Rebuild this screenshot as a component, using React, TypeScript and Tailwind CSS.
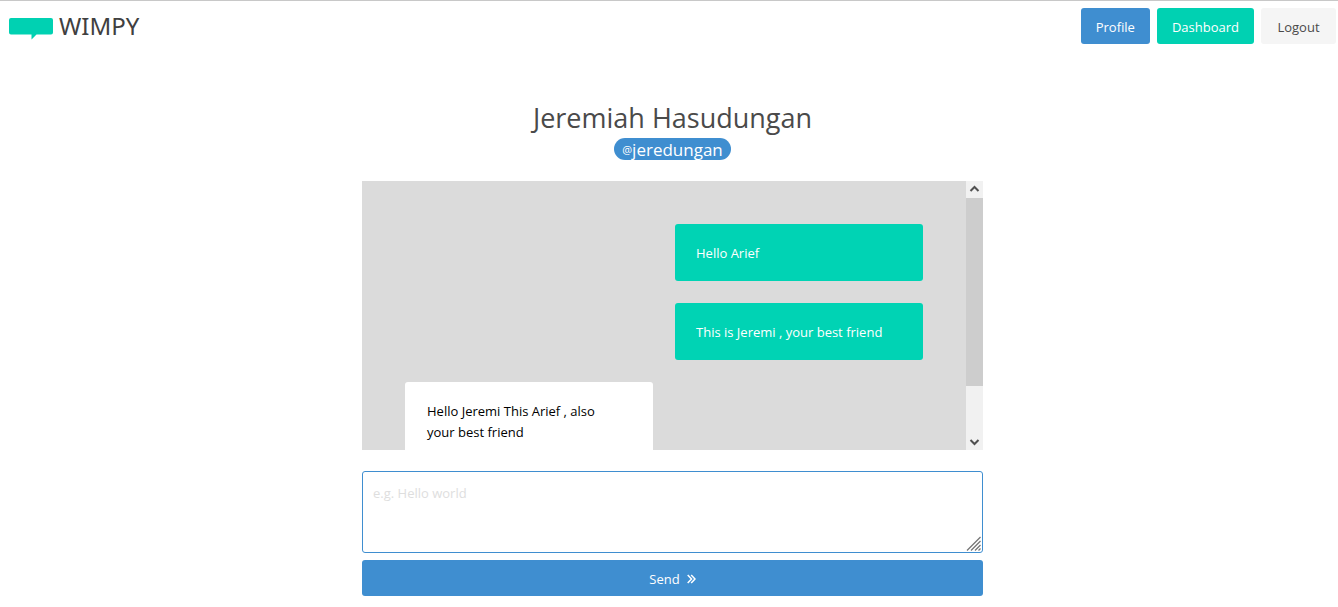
import { useState } from "react";

type Message = { id: number; text: string; mine: boolean };

const messages: Message[] = [
  { id: 1, text: "Hello Arief", mine: true },
  { id: 2, text: "This is Jeremi , your best friend", mine: true },
  { id: 3, text: "Hello Jeremi This Arief , also your best friend", mine: false },
];

function Logo() {
  return (
    <a href="#home" aria-label="Wimpy home" className="flex items-center gap-1.5 text-[#404040]">
      <svg width="44" height="22" viewBox="0 0 44 22" className="mt-1.5" aria-hidden="true">
        <path
          d="M2 0H42Q44 0 44 2V14.5Q44 16.500 42 16.500H27.500L22.500 21.500V16.500H2Q0 16.500 0 14.500V2Q0 0 2 0Z"
          fill="#00d1b2"
        />
      </svg>
      <span className="font-['Noto_Sans',sans-serif] text-[24px] leading-6">WIMPY</span>
    </a>
  );
}

function Header() {
  return (
    <header className="flex items-start justify-between border-t border-[#c8c8c8] pt-[7px] pr-0.5 pl-[9px]">
      <div className="pt-1">
        <Logo />
      </div>
      <nav className="flex gap-[7px]">
        <a href="#profile" className="flex h-9 items-center rounded-[3px] bg-[#3f8ed0] px-[15px] pt-0.5 text-white">
          Profile
        </a>
        <a href="#dashboard" className="flex h-9 items-center rounded-[3px] bg-[#00d1b2] px-[15px] pt-0.5 text-white">
          Dashboard
        </a>
        <a href="#logout" className="flex h-9 w-[75px] items-center justify-center rounded-[3px] bg-[#f5f5f5] pt-0.5 text-[#4a4a4a]">
          Logout
        </a>
      </nav>
    </header>
  );
}

function Bubble({ message }: { message: Message }) {
  return (
    <li
      className={
        message.mine
          ? "w-[248px] self-end rounded-[3px] bg-[#00d3b4] px-[21px] pt-[19px] pb-[17px] text-white"
          : "w-[248px] self-start rounded-[3px] bg-white pt-[19px] pr-9 pb-[17px] pl-[22px] text-black"
      }
    >
      {message.text}
    </li>
  );
}

function ScrollTrack() {
  return (
    <div className="flex w-[17px] shrink-0 flex-col bg-[#f1f1f1]" aria-hidden="true">
      <svg width="17" height="17" viewBox="0 0 17 17" fill="none" stroke="#505050" strokeWidth="2">
        <path d="M4.500 10L8.500 6L12.500 10" />
      </svg>
      <div className="flex-1">
        <div className="h-4/5 bg-[#cdcdcd]" />
      </div>
      <svg width="17" height="17" viewBox="0 0 17 17" fill="none" stroke="#505050" strokeWidth="2">
        <path d="M4.500 7L8.500 11L12.500 7" />
      </svg>
    </div>
  );
}

export default function App() {
  const [draft, setDraft] = useState("");
  return (
    <div className="bg-white font-['Open_Sans','Noto_Sans',sans-serif] text-[13px] leading-[21px]">
      <Header />
      <main className="pt-14 pb-[11px] pl-[7px]">
        <div className="mx-auto w-full max-w-[621px]">
          <div className="flex flex-col items-center">
            <h1 className="text-[27px] leading-9 text-[#4a4a4a]">Jeremiah Hasudungan</h1>
            <p className="mt-0.5 flex h-[22px] items-center rounded-full bg-[#3f8ed0] px-2 text-[17px] text-white">
              <span className="text-[11px]">@</span>jeredungan
            </p>
          </div>
          <section aria-label="Conversation" className="mt-[21px] flex h-[269px] bg-[#dbdbdb]">
            <ul className="flex min-w-0 flex-1 flex-col gap-[22px] overflow-y-auto px-[43px] pt-[43px] [scrollbar-width:none]">
              {messages.map((message) => (
                <Bubble key={message.id} message={message} />
              ))}
            </ul>
            <ScrollTrack />
          </section>
          <form className="mt-[21px] flex flex-col gap-[7px]" onSubmit={(event) => event.preventDefault()}>
            <div className="relative">
              <textarea
                aria-label="Message"
                placeholder="e.g. Hello world"
                value={draft}
                onChange={(event) => setDraft(event.target.value)}
                className="block h-[82px] w-full resize-none rounded-[3px] border border-[#3f8ed0] bg-white px-2.5 py-[11px] text-[#363636] outline-none placeholder:text-[#dedede]"
              />
              <svg
                width="15"
                height="15"
                viewBox="0 0 15 15"
                fill="none"
                stroke="#777777"
                strokeWidth="1.300"
                className="pointer-events-none absolute right-0.5 bottom-0.5"
                aria-hidden="true"
              >
                <path d="M1 14.500L14.500 1M5 14.500L14.500 5M9 14.500L14.500 9M12.500 14.500L14.500 12.500" />
              </svg>
            </div>
            <button
              type="submit"
              className="flex h-9 items-center justify-center gap-[7px] rounded-[3px] bg-[#3f8ed0] pt-0.5 text-white"
            >
              Send
              <svg
                width="9"
                height="10"
                viewBox="0 0 9 10"
                fill="none"
                stroke="currentColor"
                strokeWidth="1.500"
                aria-hidden="true"
              >
                <path d="M0.700 1L4.500 5L0.700 9M4.200 1L8 5L4.200 9" />
              </svg>
            </button>
          </form>
        </div>
      </main>
    </div>
  );
}
